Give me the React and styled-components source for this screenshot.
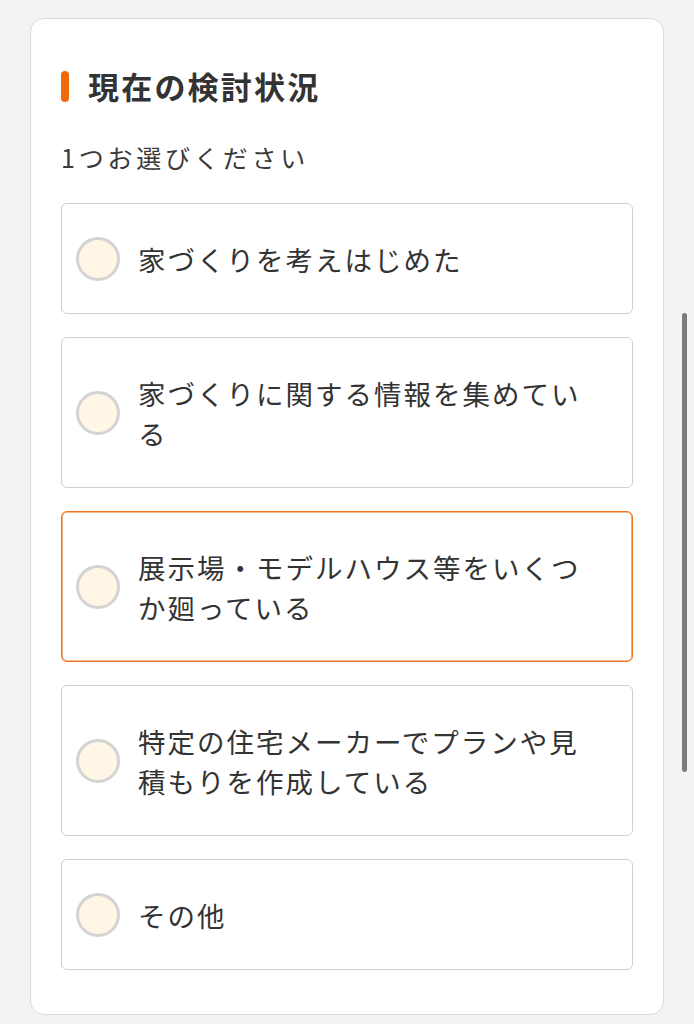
import React from "react";
import styled, { createGlobalStyle } from "styled-components";

const GlobalStyle = createGlobalStyle`
  html, body {
    margin: 0;
    padding: 0;
    background: #f3f3f3;
  }
  body {
    font-family: "Noto Sans CJK JP", "Noto Sans", sans-serif;
    color: #333;
  }
`;

const Page = styled.div`
  padding: 18px 30px 10px;
  position: relative;
  min-height: 1024px;
  box-sizing: border-box;
`;

const Card = styled.section`
  background: #fff;
  border: 1.5px solid #dadada;
  border-radius: 14px;
  padding: 50px 30px 44px;
`;

const Heading = styled.h2`
  display: flex;
  align-items: center;
  gap: 19px;
  margin: 0;
  font-size: 31px;
  font-weight: 700;
  letter-spacing: 2.2px;
  line-height: 34px;
  color: #333;
  &::before {
    content: "";
    display: block;
    width: 8px;
    height: 31px;
    border-radius: 4px;
    background: #ee6a0c;
  }
`;

const Lead = styled.p`
  margin: 39px 0 0;
  font-size: 25px;
  font-weight: 400;
  letter-spacing: 3.8px;
  line-height: 30px;
  color: #3a3a3a;
`;

const Options = styled.div`
  display: flex;
  flex-direction: column;
  gap: 23px;
  margin-top: 31px;
`;

const Option = styled.label`
  display: flex;
  align-items: center;
  gap: 18px;
  padding: 0 36px 0 14px;
  border: 1.5px solid ${(p) => (p.$active ? "#ef7420" : "#cfcfcf")};
  box-shadow: ${(p) => (p.$active ? "inset 0 0 0 0.6px #ef7420" : "none")};
  border-radius: 6px;
  background: #fff;
  cursor: pointer;
`;

const Radio = styled.span`
  flex: none;
  width: 38px;
  height: 38px;
  border-radius: 50%;
  border: 3px solid #d3d3d3;
  background: #fff6e6;
`;

const Text = styled.span`
  padding: 34.5px 0;
  font-size: 27.5px;
  letter-spacing: 2px;
  line-height: 40px;
  color: #333;
`;

const Scrollbar = styled.div`
  position: absolute;
  right: 7px;
  top: 313px;
  width: 5px;
  height: 459px;
  border-radius: 3px;
  background: #7b7b7b;
`;

const options = [
  "家づくりを考えはじめた",
  "家づくりに関する情報を集めている",
  "展示場・モデルハウス等をいくつか廻っている",
  "特定の住宅メーカーでプランや見積もりを作成している",
  "その他",
];

export default function App() {
  return (
    <>
      <GlobalStyle />
      <Page>
        <Card>
          <Heading>現在の検討状況</Heading>
          <Lead>1つお選びください</Lead>
          <Options>
            {options.map((o, i) => (
              <Option key={o} $active={i === 2}>
                <Radio />
                <Text>{o}</Text>
              </Option>
            ))}
          </Options>
        </Card>
        <Scrollbar />
      </Page>
    </>
  );
}
